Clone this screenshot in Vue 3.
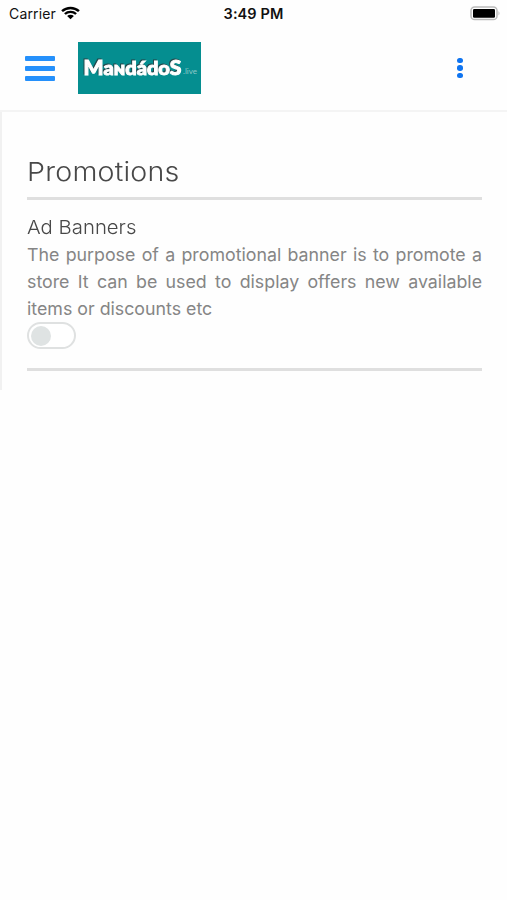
<script setup>
import {ref} from 'vue';

const bannersEnabled = ref(false);

const description = 'The purpose of a promotional banner is to promote a store It can be used to display offers new available items or discounts etc';
</script>

<template>
  <div class="screen">
    <div class="status-bar">
      <div class="carrier">
        <span>Carrier</span>
        <svg class="wifi" viewBox="0 0 18 14" width="19" height="14" preserveAspectRatio="none">
          <path d="M1 5.2 A11.6 11.6 0 0 1 17 5.2" />
          <path d="M3.7 8 A7.7 7.7 0 0 1 14.3 8" />
          <path class="fill" d="M5.8 10.1 A4.6 4.6 0 0 1 12.2 10.1 L9 13.3 Z" />
        </svg>
      </div>
      <div class="time">3:49 PM</div>
      <svg class="battery" viewBox="0 0 31 15" width="31" height="15">
        <rect class="case" x="1" y="1" width="26" height="12.6" rx="3.6" />
        <rect x="3" y="3" width="22" height="8.8" rx="1.2" />
        <path class="tip" d="M28.5 5 Q30.5 7.3 28.5 9.6 Z" />
      </svg>
    </div>

    <header class="header">
      <button class="menu" aria-label="Menu">
        <i></i><i></i><i></i>
      </button>
      <svg class="logo" viewBox="0 0 123 52" width="123" height="52">
        <text class="logo-text" x="5.5" y="32.5" textLength="98" lengthAdjust="spacingAndGlyphs">M<tspan class="small">aɴdádo</tspan>S</text>
        <text class="logo-live" x="105" y="32.3" textLength="14" lengthAdjust="spacingAndGlyphs">.live</text>
      </svg>
      <button class="more" aria-label="More">
        <i></i><i></i><i></i>
      </button>
    </header>

    <main class="content">
      <h1 class="title"><span>Promotions</span></h1>
      <section class="option">
        <h2 class="name"><span>Ad Banners</span></h2>
        <p class="description">{{ description }}</p>
        <button class="switch" :class="{ on: bannersEnabled }" role="switch" :aria-checked="bannersEnabled"
                aria-label="Ad Banners" @click="bannersEnabled = !bannersEnabled">
          <span class="knob"></span>
        </button>
      </section>
    </main>
  </div>
</template>

<style>
body {
  background: #fefefe;
}
</style>

<style scoped>
.screen {
  min-height: 900px;
  background: #fefefe;
  font-family: Inter, "Liberation Sans", sans-serif;
}

button {
  border: 0;
  padding: 0;
  background: none;
  cursor: pointer;
}

.status-bar {
  height: 27px;
  display: grid;
  grid-template-columns: 1fr auto 1fr;
  align-items: center;
  padding: 0 6px 0 9px;
  box-sizing: border-box;
  color: #111;
}

.carrier {
  display: flex;
  align-items: center;
  gap: 5px;
  font-size: 14px;
  letter-spacing: 0.15px;
}

.wifi {
  margin-top: -1px;
}

.wifi path {
  fill: none;
  stroke: #000;
  stroke-width: 2.3;
}

.wifi .fill {
  fill: #000;
  stroke: none;
}

.time {
  margin-right: 3px;
  font-size: 14.5px;
  font-weight: 600;
  letter-spacing: 0.1px;
}

.battery {
  justify-self: end;
}

.battery .case {
  fill: #fff;
  stroke: #bbb;
  stroke-width: 1.5;
}

.battery .tip {
  fill: #bbb;
}

.header {
  height: 85px;
  display: flex;
  align-items: center;
  padding: 0 44px 1px 25px;
  box-sizing: border-box;
  border-bottom: 2px solid #f4f4f4;
}

.menu {
  width: 30px;
  display: flex;
  flex-direction: column;
  gap: 5px;
}

.menu i {
  width: 30px;
  height: 5px;
  border-radius: 1px;
  background: #2590fb;
}

.logo {
  margin-left: 23px;
  background: #058e90;
}

.logo-text {
  font-family: Lato, sans-serif;
  font-size: 20px;
  font-weight: 900;
  fill: #fff;
  stroke: #fff;
  stroke-width: 1px;
  filter: drop-shadow(-1px -1px 0 #23484b);
}

.logo-text .small {
  font-size: 19px;
}

.logo-live {
  font-family: Lato, sans-serif;
  font-size: 8px;
  fill: #8fc8c9;
}

.more {
  width: 6px;
  margin-left: auto;
  display: flex;
  flex-direction: column;
  gap: 2px;
}

.more i {
  width: 5.5px;
  height: 5.5px;
  border-radius: 50%;
  background: #0f74f0;
}

.content {
  height: 278px;
  padding: 44px 25px 0 25px;
  box-sizing: border-box;
  border-left: 2px solid #f1f1f1;
}

.title {
  height: 44px;
  margin: 0;
  border-bottom: 3px solid #dfdfdf;
  box-sizing: border-box;
  color: #484848;
  font-size: 26px;
  font-weight: 350;
  line-height: 31px;
  letter-spacing: 0.2px;
}

/* widen the letters, not only the gaps between them */
.title span, .name span {
  display: inline-block;
  transform: scaleX(1.1);
  transform-origin: 0 50%;
}

.option {
  height: 171px;
  padding-top: 15px;
  box-sizing: border-box;
  border-bottom: 3px solid #dfdfdf;
}

.name {
  margin: 0;
  color: #484848;
  font-size: 19px;
  font-weight: 350;
  line-height: 26px;
}

.name span {
  transform: scaleX(1.07);
}

.description {
  margin: 0;
  color: #858585;
  font-size: 17.8px;
  line-height: 27px;
  text-align: justify;
}

.switch {
  width: 49px;
  height: 27px;
  display: flex;
  align-items: center;
  padding: 0 2px;
  box-sizing: border-box;
  border: 2px solid #dfe1e1;
  border-radius: 14px;
  background: #fff;
}

.switch.on {
  justify-content: flex-end;
  border-color: #2590fb;
}

.knob {
  width: 20px;
  height: 20px;
  border-radius: 50%;
  background: #dfe3e3;
}

.switch.on .knob {
  background: #2590fb;
}
</style>
